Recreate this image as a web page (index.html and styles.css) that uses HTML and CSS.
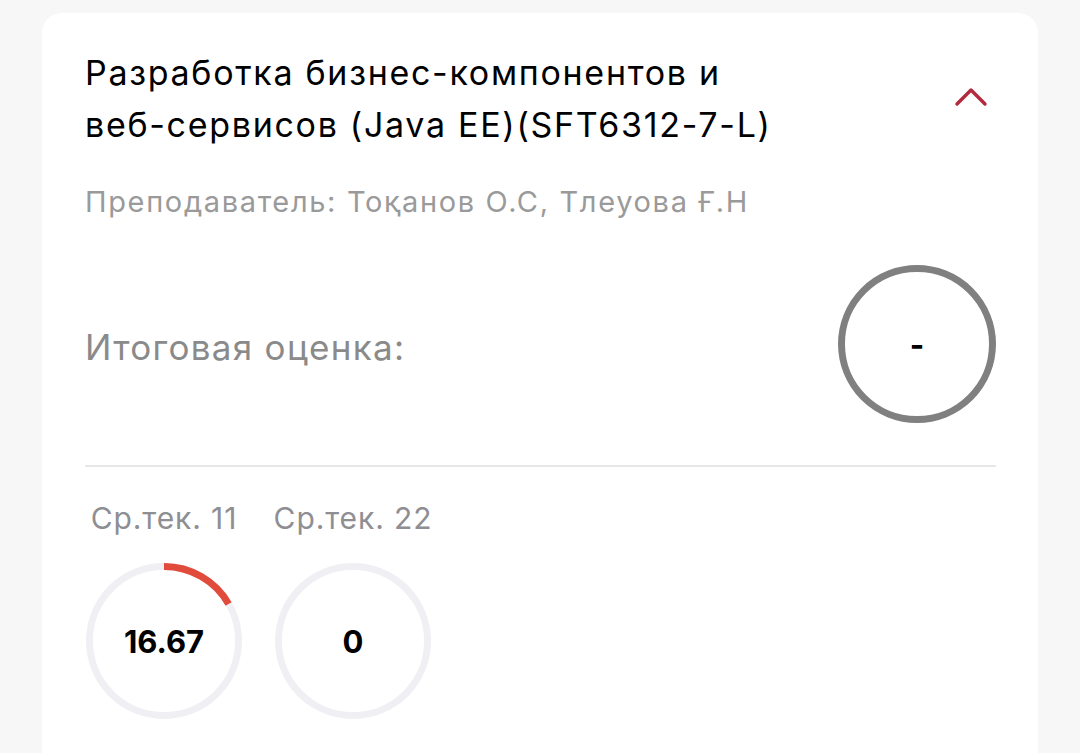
FILE: index.html
```html
<!DOCTYPE html>
<html lang="ru">
<head>
<meta charset="utf-8">
<title>Курс</title>
<link rel="stylesheet" href="styles.css">
</head>
<body>
<div class="card">
  <div class="head">
    <div class="title">Разработка <span class="nw">бизнес-компонентов</span> и <span class="nw">веб-сервисов</span> (Java EE)(SFT6312-7-L)</div>
    <svg class="chevron" width="34" height="22" viewBox="0 0 34 22">
      <polyline points="3,18 17,4 31,18" fill="none" stroke="#b3293d" stroke-width="3.4" stroke-linecap="round" stroke-linejoin="round"/>
    </svg>
  </div>
  <div class="teacher">Преподаватель: Тоқанов О.С, Тлеуова Ғ.Н</div>
  <div class="final">
    <div class="final-label">Итоговая оценка:</div>
    <div class="ring big">
      <svg width="158" height="158" viewBox="0 0 158 158">
        <circle cx="79" cy="79" r="75.5" fill="none" stroke="#808080" stroke-width="7"/>
      </svg>
      <span class="ring-value">-</span>
    </div>
  </div>
  <div class="divider"></div>
  <div class="stats">
    <div class="stat">
      <div class="stat-label">Ср.тек. 11</div>
      <div class="ring small">
        <svg width="156" height="156" viewBox="0 0 156 156">
          <circle cx="78" cy="78" r="74.5" fill="none" stroke="#f0f0f4" stroke-width="7"/>
          <circle cx="78" cy="78" r="74.5" fill="none" stroke="#e04b3b" stroke-width="7" stroke-dasharray="78 400" transform="rotate(-90 78 78)"/>
        </svg>
        <span class="ring-value">16.67</span>
      </div>
    </div>
    <div class="stat">
      <div class="stat-label">Ср.тек. 22</div>
      <div class="ring small">
        <svg width="156" height="156" viewBox="0 0 156 156">
          <circle cx="78" cy="78" r="74.5" fill="none" stroke="#f0f0f4" stroke-width="7"/>
        </svg>
        <span class="ring-value">0</span>
      </div>
    </div>
  </div>
</div>
</body>
</html>
```

FILE: styles.css
```css
html, body {
  margin: 0;
  padding: 0;
  background: #f7f7f7;
  height: 100%;
  overflow: hidden;
}

body {
  padding-top: 13px;
  font-family: Inter, "Noto Sans", sans-serif;
  color: #000;
}

.card {
  margin-left: 42px;
  width: 996px;
  box-sizing: border-box;
  background: #fff;
  border-radius: 20px 20px 0 0;
  padding: 34px 42px 60px 43px;
  min-height: 760px;
}

.head {
  display: flex;
  justify-content: space-between;
  align-items: flex-start;
}

.title {
  font-size: 34px;
  line-height: 52px;
  letter-spacing: 1.7px;
  max-width: 780px;
  color: #000;
}

.nw {
  white-space: nowrap;
}

.chevron {
  margin-top: 39px;
  margin-right: 8px;
}

.teacher {
  margin-top: 33px;
  font-size: 29px;
  line-height: 36px;
  letter-spacing: 1.65px;
  color: #9a9a9a;
}

.final {
  margin-top: 45px;
  display: flex;
  align-items: center;
  justify-content: space-between;
}

.final-label {
  margin-top: 5px;
  font-size: 35px;
  line-height: 44px;
  letter-spacing: 1.3px;
  color: #8a8a8a;
}

.ring {
  position: relative;
  display: flex;
  align-items: center;
  justify-content: center;
}

.ring svg {
  display: block;
}

.ring-value {
  position: absolute;
  font-weight: 700;
  font-size: 31px;
  color: #000;
}

.divider {
  margin-top: 42px;
  height: 2px;
  background: #e6e6e6;
  border-radius: 1px;
}

.stats {
  display: flex;
  gap: 33px;
  margin-top: 32px;
  margin-left: 1px;
}

.stat {
  width: 156px;
  display: flex;
  flex-direction: column;
  align-items: center;
}

.stat-label {
  font-size: 30px;
  line-height: 38px;
  letter-spacing: 0.9px;
  color: #8e8e93;
  white-space: nowrap;
}

.ring.small {
  margin-top: 26px;
}
```
